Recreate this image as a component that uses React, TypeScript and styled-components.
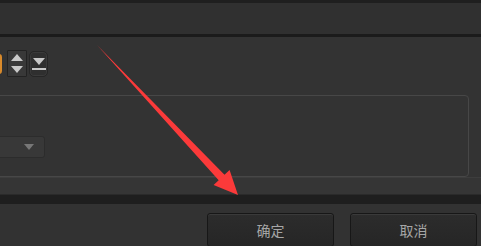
import React from 'react';
import styled, { createGlobalStyle } from 'styled-components';

const Global = createGlobalStyle`
    html, body { margin:0; padding:0; background:#333333; overflow:hidden; }
    body { font-family:"Noto Sans CJK SC", "Liberation Sans", sans-serif; }
`

const Page = styled.div`
    position:relative;
    width:481px;
    height:246px;
    display:flex;
    flex-direction:column;
    overflow:hidden;
    background:#333333;
`

const TopStrip = styled.div`
    height:3px;
    background:#1f1f1f;
`

const Toolbar = styled.div`
    height:32px;
    background:#303030;
`

const Divider = styled.div<{ h: number, c: string }>`
    height:${p => p.h}px;
    background:${p => p.c};
    flex-shrink:0;
`

const Content = styled.div`
    flex:1;
    display:flex;
    flex-direction:column;
    padding-top:13px;
`

const SpinRow = styled.div`
    display:flex;
    align-items:center;
    gap:2px;
    height:27px;
    margin-left:-26px;
`

const NumBox = styled.div`
    width:28px;
    height:20px;
    box-sizing:border-box;
    border:1px solid #d98a2b;
    border-right:2px solid #d98a2b;
    border-radius:3px;
    background:#2a3440;
    margin-right:3px;
`

const SpinButton = styled.div<{ round?: boolean }>`
    width:${p => p.round ? 19 : 20}px;
    height:${p => p.round ? 26 : 27}px;
    box-sizing:border-box;
    border:1px solid ${p => p.round ? '#262626' : '#222'};
    border-radius:${p => p.round ? 5 : 1}px;
    background:${p => p.round ? '#2f2f2f' : '#383838'};
    box-shadow:${p => p.round ? 'inset 0 0 0 1px #3a3a3a' : 'none'};
    display:flex;
    align-items:center;
    justify-content:center;
`

const GroupBox = styled.div`
    margin-top:18px;
    margin-left:-20px;
    margin-right:12px;
    height:82px;
    box-sizing:border-box;
    border:1px solid #474747;
    border-radius:4px;
    display:flex;
    flex-direction:column;
    padding-top:40px;
`

const Combo = styled.div`
    width:64px;
    height:22px;
    box-sizing:border-box;
    border:1px solid #2c2c2c;
    border-radius:3px;
    background:#383838;
    display:flex;
    align-items:center;
    justify-content:flex-end;
    padding-right:10px;
`

const Band = styled.div`
    height:16px;
    background:#353535;
    border-top:1px solid #3d3d3d;
    border-bottom:1px solid #2a2a2a;
`

const Footer = styled.div`
    height:42px;
    background:#323232;
    display:flex;
    align-items:flex-start;
    justify-content:flex-end;
    gap:16px;
    padding:9px 4px 0 0;
    box-sizing:border-box;
    flex-shrink:0;
`

const Button = styled.div`
    width:127px;
    height:34px;
    box-sizing:border-box;
    border:1px solid #171717;
    border-radius:3px;
    background:linear-gradient(#2c2c2c, #262626);
    box-shadow:inset 0 1px 0 #3a3a3a;
    color:#a6a6a6;
    font-size:14px;
    display:flex;
    align-items:center;
    justify-content:center;
`

const Overlay = styled.svg`
    position:absolute;
    left:0;
    top:0;
    pointer-events:none;
`

const App: React.FC = () => {
    return <>
        <Global />
        <Page>
            <TopStrip />
            <Toolbar />
            <Divider h={3} c='#1b1b1b' />
            <Content>
                <SpinRow>
                    <NumBox />
                    <SpinButton>
                        <svg width='16' height='24' viewBox='0 0 16 24'>
                            <polygon points='8,2 14,9 2,9' fill='#c8c8c8' />
                            <polygon points='2,14 14,14 8,21' fill='#c8c8c8' />
                        </svg>
                    </SpinButton>
                    <SpinButton round>
                        <svg width='14' height='16' viewBox='0 0 14 16'>
                            <polygon points='1,2 13,2 7,9' fill='#c8c8c8' />
                            <rect x='0' y='12' width='14' height='2' fill='#c8c8c8' />
                        </svg>
                    </SpinButton>
                </SpinRow>
                <GroupBox>
                    <Combo>
                        <svg width='10' height='6' viewBox='0 0 10 6'>
                            <polygon points='0,0 10,0 5,6' fill='#777' />
                        </svg>
                    </Combo>
                </GroupBox>
                <Band />
            </Content>
            <Divider h={9} c='#1e1e1e' />
            <Footer>
                <Button>确定</Button>
                <Button>取消</Button>
            </Footer>
            <Overlay width='481' height='246' viewBox='0 0 481 246'>
                <polygon
                    points='97,45 218.7,180.2 213.6,185 238,195 229.6,170 224.5,174.8'
                    fill='#fb3a3a'
                />
            </Overlay>
        </Page>
    </>
}

export default App;
